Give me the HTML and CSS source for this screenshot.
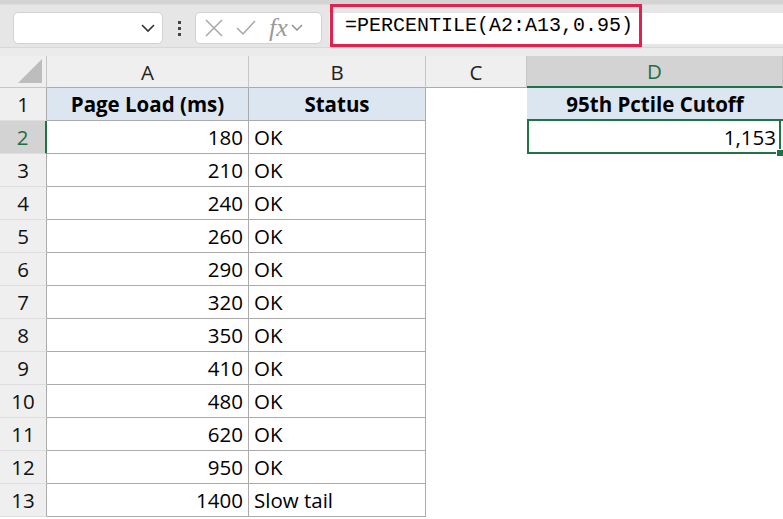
FILE: index.html
```html
<!DOCTYPE html>
<html lang="en">
<head>
    <meta charset="UTF-8">
    <title>Percentile Sheet</title>
    <link rel="stylesheet" href="styles.css">
</head>
<body>
    <div class="topband"></div>
    <div class="toolbar">
        <div class="namebox">
            <svg class="chev" width="16" height="10" viewBox="0 0 16 10"><path d="M2 2 L8 8 L14 2" fill="none" stroke="#333" stroke-width="1.6"/></svg>
        </div>
        <div class="dots"><span></span><span></span><span></span></div>
        <div class="fnbox">
            <svg width="20" height="20" viewBox="0 0 20 20"><path d="M2 2 L18 18 M18 2 L2 18" stroke="#a6a6a6" stroke-width="1.5" fill="none"/></svg>
            <svg width="22" height="20" viewBox="0 0 22 20"><path d="M2 10 L8 16 L20 3" stroke="#a6a6a6" stroke-width="1.5" fill="none"/></svg>
            <span class="fx">fx</span>
            <svg width="14" height="10" viewBox="0 0 14 10"><path d="M2 2 L7 7 L12 2" fill="none" stroke="#8a8a8a" stroke-width="1.4"/></svg>
        </div>
        <div class="formula">
            <span class="ftext">=PERCENTILE(A2:A13,0.95)</span>
        </div>
    </div>
    <div class="gapband"></div>

    <div class="sheet">
        <div class="corner"><span class="tri"></span></div>
        <div class="colhead">A</div>
        <div class="colhead">B</div>
        <div class="colhead">C</div>
        <div class="colhead sel">D</div>

        <div class="rowhead">1</div>
        <div class="cell hdr">Page Load (ms)</div>
        <div class="cell hdr">Status</div>
        <div class="cell blank"></div>
        <div class="cell hdr dcol">95th Pctile Cutoff</div>

        <div class="rowhead sel">2</div>
        <div class="cell num">180</div>
        <div class="cell">OK</div>
        <div class="cell blank"></div>
        <div class="cell num active">1,153<span class="handle"></span></div>

        <div class="rowhead">3</div>
        <div class="cell num">210</div>
        <div class="cell">OK</div>
        <div class="cell blank"></div>
        <div class="cell empty"></div>

        <div class="rowhead">4</div>
        <div class="cell num">240</div>
        <div class="cell">OK</div>
        <div class="cell blank"></div>
        <div class="cell empty"></div>

        <div class="rowhead">5</div>
        <div class="cell num">260</div>
        <div class="cell">OK</div>
        <div class="cell blank"></div>
        <div class="cell empty"></div>

        <div class="rowhead">6</div>
        <div class="cell num">290</div>
        <div class="cell">OK</div>
        <div class="cell blank"></div>
        <div class="cell empty"></div>

        <div class="rowhead">7</div>
        <div class="cell num">320</div>
        <div class="cell">OK</div>
        <div class="cell blank"></div>
        <div class="cell empty"></div>

        <div class="rowhead">8</div>
        <div class="cell num">350</div>
        <div class="cell">OK</div>
        <div class="cell blank"></div>
        <div class="cell empty"></div>

        <div class="rowhead">9</div>
        <div class="cell num">410</div>
        <div class="cell">OK</div>
        <div class="cell blank"></div>
        <div class="cell empty"></div>

        <div class="rowhead">10</div>
        <div class="cell num">480</div>
        <div class="cell">OK</div>
        <div class="cell blank"></div>
        <div class="cell empty"></div>

        <div class="rowhead">11</div>
        <div class="cell num">620</div>
        <div class="cell">OK</div>
        <div class="cell blank"></div>
        <div class="cell empty"></div>

        <div class="rowhead">12</div>
        <div class="cell num">950</div>
        <div class="cell">OK</div>
        <div class="cell blank"></div>
        <div class="cell empty"></div>

        <div class="rowhead">13</div>
        <div class="cell num">1400</div>
        <div class="cell">Slow tail</div>
        <div class="cell blank"></div>
        <div class="cell empty"></div>
    </div>
</body>
</html>
```

FILE: styles.css
```css
body {
    margin: 0;
    width: 783px;
    height: 519px;
    overflow: hidden;
    background: #fff;
    font-family: "Open Sans", Lato, sans-serif;
    color: #000;
}
.topband {
    height: 4px;
    background: #d4d4d4;
    border-bottom: 1px solid #dcdcdc;
}
.toolbar {
    height: 42px;
    background: #e6e6e6;
    display: flex;
    align-items: flex-start;
    padding: 7px 0 0 13px;
    box-sizing: border-box;
}
.namebox {
    width: 150px;
    height: 32px;
    background: #fff;
    border: 1px solid #d2d2d2;
    border-radius: 5px;
    box-sizing: border-box;
    display: flex;
    align-items: center;
    justify-content: flex-end;
    padding-right: 6px;
}
.dots {
    width: 32px;
    height: 32px;
    display: flex;
    flex-direction: column;
    align-items: center;
    justify-content: center;
    gap: 3px;
}
.dots span {
    width: 3px;
    height: 3px;
    background: #444;
}
.fnbox {
    width: 127px;
    height: 32px;
    background: #fff;
    border: 1px solid #d2d2d2;
    border-radius: 5px;
    box-sizing: border-box;
    display: flex;
    align-items: center;
    padding-left: 8px;
    gap: 11px;
}
.fx {
    font-family: "Liberation Serif", serif;
    font-style: italic;
    font-size: 26px;
    color: #9a9a9a;
    margin-left: 1px;
    margin-right: -9px;
    line-height: 1;
}
.formula {
    flex: 1;
    height: 31px;
    margin-top: 1px;
    margin-left: 7px;
    background: #fff;
    display: flex;
    align-items: center;
}
.ftext {
    position: relative;
    top: -3px;
    font-family: "Liberation Mono", monospace;
    font-size: 20px;
    line-height: 23px;
    color: #000;
    padding: 7px 6px 7px 12px;
    border: 3px solid #e4204e;
    margin-left: 1px;
}
.gapband {
    height: 9px;
    background: #ebebeb;
    border-top: 1px solid #d8d8d8;
    box-sizing: border-box;
}
.sheet {
    display: grid;
    grid-template-columns: 47px 202px 177px 101px 256px;
    grid-template-rows: 32px repeat(13, 33px);
    font-size: 20.5px;
}
.corner {
    background: #efefef;
    border-right: 1px solid #c6c6c6;
    border-bottom: 1px solid #c6c6c6;
    position: relative;
}
.tri {
    position: absolute;
    right: 4px;
    bottom: 4px;
    width: 0;
    height: 0;
    border-left: 24px solid transparent;
    border-bottom: 24px solid #bdbdbd;
}
.colhead {
    background: #efefef;
    border-right: 1px solid #c6c6c6;
    border-bottom: 1px solid #ababab;
    display: flex;
    align-items: center;
    justify-content: center;
    color: #222;
}
.colhead.sel {
    background: #d3d3d3;
    color: #1e6e43;
    border-bottom: 2px solid #217346;
}
.rowhead {
    background: #efefef;
    border-right: 1px solid #ababab;
    border-bottom: 1px solid #dedede;
    display: flex;
    align-items: center;
    justify-content: center;
    color: #111;
}
.rowhead.sel {
    background: #d3d3d3;
    color: #1e6e43;
    border-right: 2px solid #217346;
}
.cell {
    border-right: 1px solid #ababab;
    border-bottom: 1px solid #ababab;
    display: flex;
    align-items: center;
    padding: 0 5px;
    white-space: nowrap;
}
.cell.num {
    justify-content: flex-end;
}
.cell.hdr {
    background: #dce6f1;
    font-weight: bold;
    justify-content: center;
}
.cell.blank {
    border-bottom: none;
    border-right: none;
}
.cell.empty {
    border: none;
}
.cell.dcol {
    border-right: none;
    border-bottom: 2px solid #217346;
}
.cell.active {
    position: relative;
    border: 2px solid #217346;
    border-top: none;
    margin-right: 2px;
    padding-right: 3px;
}
.handle {
    position: absolute;
    right: -5px;
    bottom: -5px;
    width: 6px;
    height: 6px;
    background: #217346;
    border: 1px solid #fff;
}
```
